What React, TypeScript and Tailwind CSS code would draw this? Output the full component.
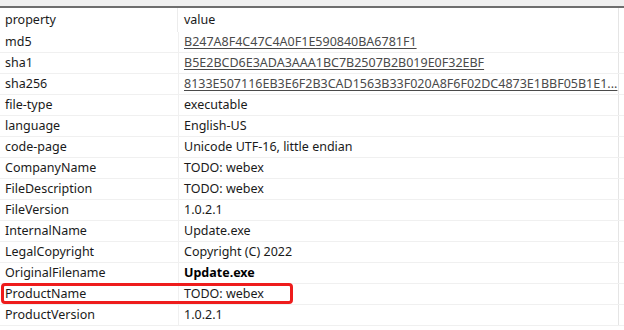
import React from "react";

const rows: { k: string; v: string; link?: boolean; bold?: boolean }[] = [
  { k: "md5", v: "B247A8F4C47C4A0F1E590840BA6781F1", link: true },
  { k: "sha1", v: "B5E2BCD6E3ADA3AAA1BC7B2507B2B019E0F32EBF", link: true },
  { k: "sha256", v: "8133E507116EB3E6F2B3CAD1563B33F020A8F6F02DC4873E1BBF05B1E1...", link: true },
  { k: "file-type", v: "executable" },
  { k: "language", v: "English-US" },
  { k: "code-page", v: "Unicode UTF-16, little endian" },
  { k: "CompanyName", v: "TODO: webex" },
  { k: "FileDescription", v: "TODO: webex" },
  { k: "FileVersion", v: "1.0.2.1" },
  { k: "InternalName", v: "Update.exe" },
  { k: "LegalCopyright", v: "Copyright (C) 2022" },
  { k: "OriginalFilename", v: "Update.exe", bold: true },
  { k: "ProductName", v: "TODO: webex" },
  { k: "ProductVersion", v: "1.0.2.1" },
];

export default function App() {
  return (
    <div
      className="relative w-[624px] h-[330px] overflow-hidden bg-white text-[12.5px] text-[#1a1a1a]"
      style={{ fontFamily: '"Noto Sans", "Liberation Sans", sans-serif' }}
    >
      <div className="h-[6px] bg-[#f0f0f0]" />
      <div className="h-[2px] bg-[#6e6e6e]" />
      <div className="flex h-[24px] w-[619px] border-r border-[#e5e5e5]">
        <div className="w-[178px] pl-[5px] pt-[1px] flex items-center border-r border-[#ececec]">property</div>
        <div className="flex-1 pl-[6px] pt-[1px] flex items-center">value</div>
      </div>
      {rows.map((r) => (
        <div key={r.k} className="flex h-[21px] border-b border-[#f0f0f0]">
          <div className="w-[179px] shrink-0 pl-[5px] pt-[1px] flex items-center border-r border-[#f0f0f0] whitespace-nowrap">{r.k}</div>
          <div className="w-[440px] shrink-0 pl-[5px] pt-[1px] flex items-center border-r border-[#e5e5e5] whitespace-nowrap overflow-hidden">
            <span
              className={
                (r.link ? "underline text-[#4a4a4a] underline-offset-2" : "") +
                (r.bold ? " font-bold text-black" : "")
              }
            >
              {r.v}
            </span>
          </div>
        </div>
      ))}
      <div className="absolute left-[1px] top-[283px] w-[292px] h-[21px] border-[3px] border-[#ee1c1c] rounded-[4px]" />
    </div>
  );
}
